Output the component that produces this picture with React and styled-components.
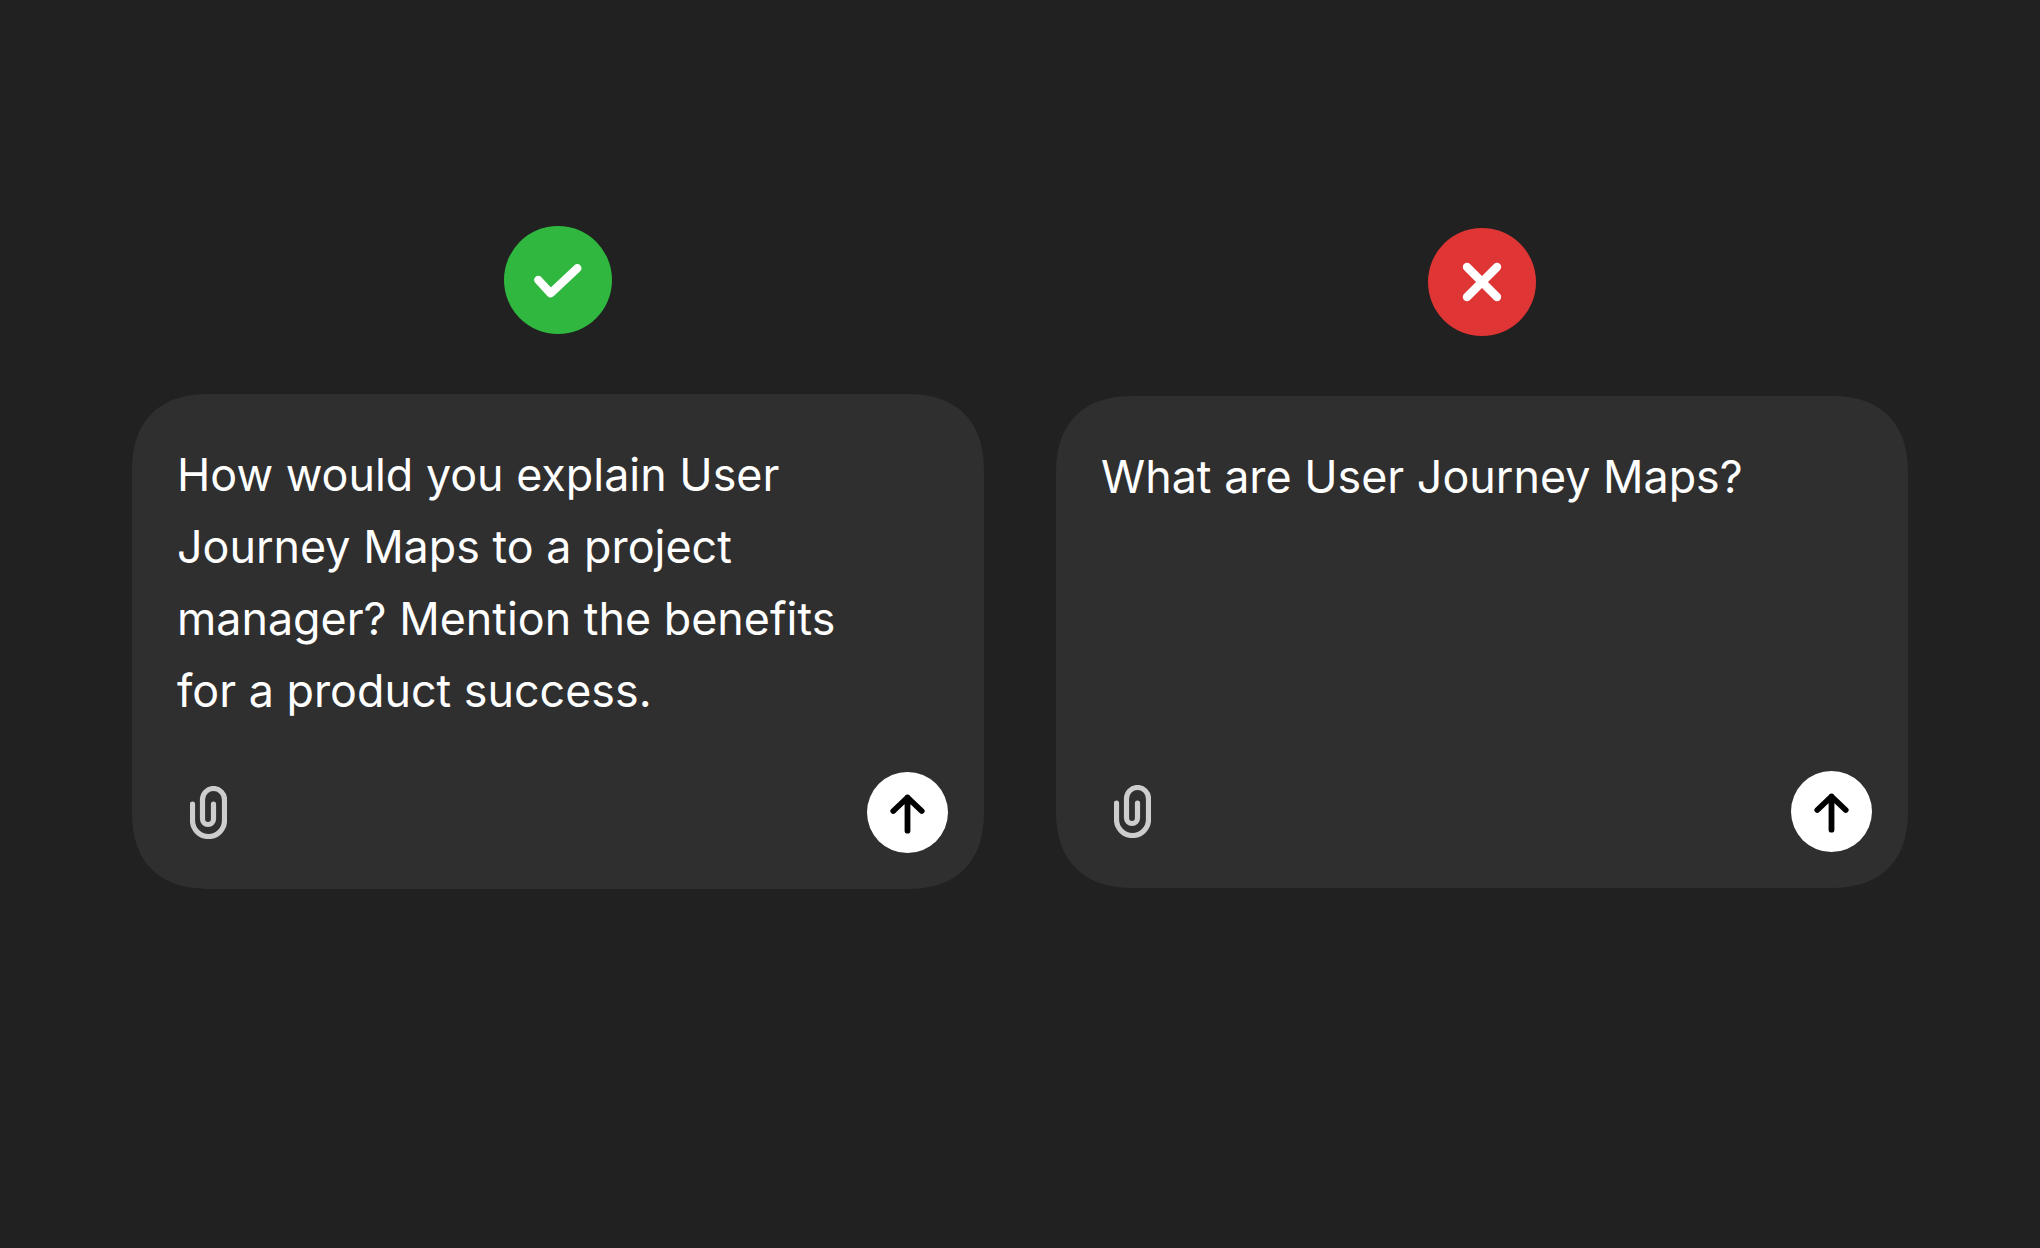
import styled, { createGlobalStyle } from "styled-components";

const GlobalStyle = createGlobalStyle`
    html, body {
        margin: 0;
        padding: 0;
        background-color: #212121;
    }
`

const Page = styled.main`
    width: 2040px;
    height: 1248px;
    box-sizing: border-box;
    padding: 226px 0 0 132px;
    display: flex;
    align-items: flex-start;
    column-gap: 72px;
    background-color: #212121;
    font-family: Inter, "Liberation Sans", sans-serif;
`

const Column = styled.section`
    width: 852px;
    margin-top: ${(props) => props.$offset}px;
    display: flex;
    flex-direction: column;
    align-items: center;
    row-gap: 60px;
`

const Badge = styled.div`
    width: 108px;
    height: 108px;
    border-radius: 50%;
    background-color: ${(props) => props.$color};
    display: flex;
    justify-content: center;
    align-items: center;
`

const Card = styled.div`
    width: 100%;
    height: ${(props) => props.$height}px;
    box-sizing: border-box;
    padding: 44.5px 36px 36px 45px;
    border-radius: 78px;
    corner-shape: superellipse(1.25);
    background-color: #2f2f2f;
    display: flex;
    flex-direction: column;
    justify-content: space-between;
`

const Prompt = styled.p`
    width: 690px;
    margin: 0;
    font-size: 44.8px;
    font-weight: 370;
    line-height: 72px;
    letter-spacing: 0.02px;
    font-variant-ligatures: none;
    color: #ffffff;
`

const Footer = styled.div`
    display: flex;
    justify-content: space-between;
    align-items: center;
`

const AttachIcon = styled.svg`
    margin-left: 13px;
    fill: none;
    stroke: #cdcdcd;
    stroke-width: 5.2;
    stroke-linecap: round;
`

const SendButton = styled.button`
    width: 81px;
    height: 81px;
    padding: 0;
    border: none;
    border-radius: 50%;
    background-color: #ffffff;
    display: flex;
    justify-content: center;
    align-items: center;
`

const Glyph = styled.svg`
    fill: none;
    stroke: ${(props) => props.$stroke};
    stroke-width: ${(props) => props.$weight};
    stroke-linecap: round;
    stroke-linejoin: round;
`

function Attach() {
    return (
        <AttachIcon width="37" height="53" viewBox="20 26 37 53">
            <path d="M43.5 44V59A5.5 5.5 0 0 1 32.5 59V39.5A11 11 0 0 1 54.5 39.5V60.5A16 16 0 0 1 22.5 60.5V44" />
        </AttachIcon>
    );
}

function Send() {
    return (
        <SendButton type="button">
            <Glyph $stroke="#000000" $weight={5.8} width="81" height="81" viewBox="0 0 81 81">
                <path d="M40.5 25.5V58.7M26.3 39L40.5 25.5L54.7 39" />
            </Glyph>
        </SendButton>
    );
}

function Example({ color, offset, height, icon, children }) {
    return (
        <Column $offset={offset}>
            <Badge $color={color}>
                <Glyph $stroke="#ffffff" $weight={8.4} width="108" height="108" viewBox="0 0 108 108">
                    <path d={icon} />
                </Glyph>
            </Badge>
            <Card $height={height}>
                <Prompt>{children}</Prompt>
                <Footer>
                    <Attach />
                    <Send />
                </Footer>
            </Card>
        </Column>
    );
}

function App() {
    return (
        <>
            <GlobalStyle />
            <Page>
                <Example color="#2fb73f" offset={0} height={495} icon="M34.3 54L46.7 67.3L73.3 42.3">
                    How would you explain User Journey Maps to a project manager? Mention the benefits for a product success.
                </Example>
                <Example color="#e03535" offset={2} height={492} icon="M39 39L69 69M69 39L39 69">
                    What are User Journey Maps?
                </Example>
            </Page>
        </>
    );
}

export default App;
